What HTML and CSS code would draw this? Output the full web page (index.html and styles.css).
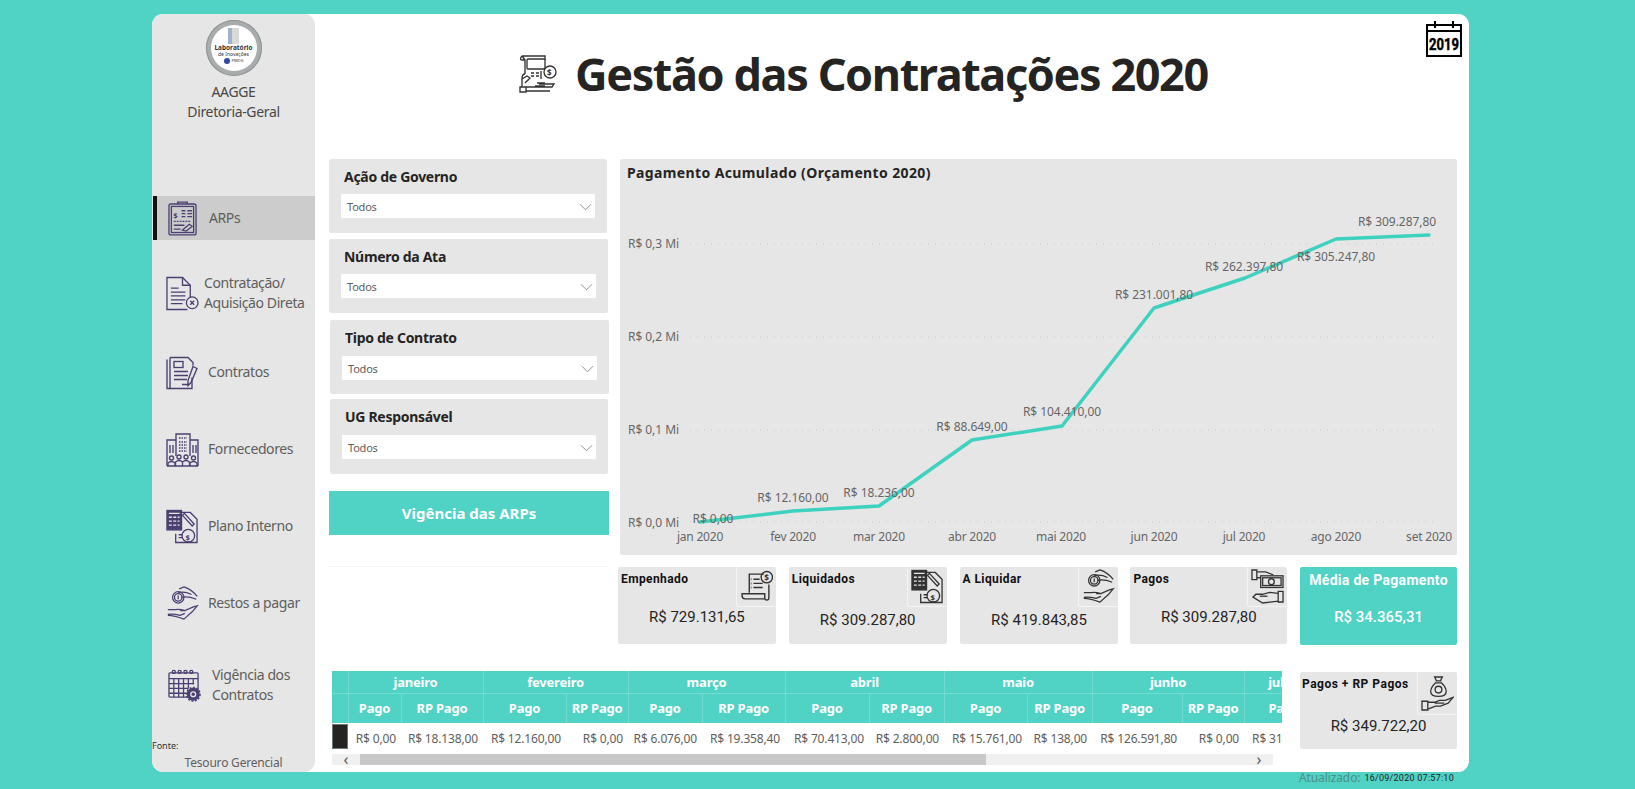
FILE: index.html
```html
<!DOCTYPE html>
<html lang="pt-BR">
<head>
<meta charset="utf-8">
<title>Gestão das Contratações 2020</title>
<link rel="stylesheet" href="styles.css">
</head>
<body>
<svg class="sprite" aria-hidden="true">
  <symbol id="i-arps" viewBox="0 0 30 36"><rect x="1" y="3" width="28" height="32" rx="2"/><rect x="3.500" y="5.500" width="23" height="27"/><path d="M10 3V1h10v2M14 10h4M20 10h5M14 13h4M20 13h5M14 16h4M20 16h5"/><path d="M6 21h18" stroke-dasharray="2 1"/><path d="M6 25h11M6 29h7M15 30l7-6 3 2-6 5z"/><text x="5.500" y="17" class="gl">$</text></symbol>
  <symbol id="i-doc-x" viewBox="0 0 34 35"><path d="M25 22V9l-8-8H1v33h21"/><path d="M17 1v8h8M5 12h8M5 16h15M5 20h15M5 24h15M5 28h12"/><circle cx="27" cy="27" r="6"/><path d="M25 25l4 4M29 25l-4 4"/></symbol>
  <symbol id="i-contract" viewBox="0 0 33 34"><path d="M4 2V33h22V22M4 2h18l5 5v3"/><path d="M1 4v29h3"/><rect x="8" y="6" width="9" height="6"/><path d="M8 16h14M8 20h14M8 24h13M16 29h7"/><path d="M27 11l4 2-6 14-3 3 0-5z"/></symbol>
  <symbol id="i-build" viewBox="0 0 33 35"><path d="M10 24V2h14v22M10 8H1v26M24 8h8v26M1 34h31"/><path d="M13 6h8M13 10h8M13 13h8M13 16h8M13 19h8" stroke-dasharray="1.500 1"/><path d="M4 13v8M7 13v8M27 13v8M30 13v8"/><circle cx="5.500" cy="26" r="2"/><circle cx="13" cy="25" r="2"/><circle cx="20" cy="25" r="2"/><circle cx="27.500" cy="26" r="2"/><path d="M2 34v-3q3.500-3 7 0v3M9.500 34v-4q3.500-3 7 0v4M16.500 34v-4q3.500-3 7 0v4M24 34v-3q3.500-3 7 0v3"/></symbol>
  <symbol id="i-plan" viewBox="0 0 34 35"><path d="M16 3h9l7 7v24H10v-9"/><rect class="solid" x="1" y="1" width="15" height="20"/><path class="lt" d="M3 4h11M3 8h3M7.500 8h3M12 8h2M3 12h3M7.500 12h3M12 12h2M3 16h3M7.500 16h3M12 16h2"/><path d="M19 4l10 11-2 2-10-11zM13 26h4M13 29h4"/><circle cx="23" cy="27" r="6.500"/><text x="20" y="31" class="gl">$</text></symbol>
  <symbol id="i-hands" viewBox="0 0 33 37"><path d="M32 11C28 6 24 3 18 1l-5 2 M12 7c5-1 10 0 14 2M15 12c5-1 11 0 16 2"/><circle cx="12" cy="12" r="6"/><circle cx="12" cy="12" r="4"/><path d="M12 10v4"/><path d="M1 25h8c3-1 7 0 10 1l9-4 4-1-5 6-9 8c-5-2-11-4-17-4M1 30c5-1 9 0 13 1l5-2M14 26h6"/></symbol>
  <symbol id="i-cal-gear" viewBox="0 0 34 34"><rect x="1" y="4" width="30" height="25" rx="1"/><path d="M1 10h30M1 15h26M1 20h20M1 25h18M6 10v19M11 10v19M16 10v19M21 10v10M26 10v6"/><circle cx="6" cy="3" r="1.600"/><circle cx="12" cy="3" r="1.600"/><circle cx="18" cy="3" r="1.600"/><circle cx="24" cy="3" r="1.600"/><circle class="solidc" cx="26" cy="26" r="6"/><circle class="gear" cx="26" cy="26" r="7" stroke-dasharray="2 1.600"/><circle class="lt" cx="26" cy="26" r="2.500"/></symbol>
  <symbol id="i-atm" viewBox="0 0 38 38"><path d="M3 1h23v4M3 1l3 4v14M3 1C1 3 1 5 3 5h3"/><rect x="8" y="4" width="18" height="10" rx="1"/><path d="M12 18h3M17 18h3M12 21h3M17 21h3M22 16v8M6 19c-2 0-3 2-3 5v8"/><circle cx="31" cy="17" r="6"/><text x="28" y="21" class="gl">$</text><path d="M3 24l5-3 3 2-5 5M3 32h4v5H1v-5zM7 32h26l2-3H20M18 28h8M16 31h10M7 36h24"/></symbol>
  <symbol id="i-receipt" viewBox="0 0 32 32"><path d="M9 22V4h14M28 14v13c0 3-4 3-4 0v-4H2v2c0 2 1 3 3 3h19"/><circle cx="26" cy="7" r="5.500"/><text x="23.500" y="10.500" class="gl">$</text><path d="M13 9h6M13 13h9M13 17h9"/><path d="M10.500 9h.6M10.500 13h.6M10.500 17h.6" stroke-width="2"/></symbol>
  <symbol id="i-cash" viewBox="0 0 34 36"><path d="M1 1h5v10H1zM6 3h9l8 3M6 9h4"/><rect x="10" y="7" width="23" height="12"/><rect x="12" y="9" width="19" height="8"/><circle cx="21" cy="13" r="3"/><path d="M33 23v11h-5V23zM28 25l-9-1-7 2H5l-3 3 10 6 16-2"/><path d="M9 28h8"/></symbol>
  <symbol id="i-bag" viewBox="0 0 34 36"><path d="M14 1h8l-2 4h-4zM15 5h6M15 7c-3 3-5 6-5 9 0 3 3 5 8 5s8-2 8-5c0-3-2-6-5-9z"/><circle cx="18" cy="14" r="3.500"/><path d="M1 26h6v9H1zM7 27h7l5-2h6l8-3-5 6-8 3H15l-8 3M14 28h10"/></symbol>
  <symbol id="i-2019" viewBox="0 0 36 37"><path d="M1 5h34v31H1zM1 11h34M9 1v7M27 1v7"/><text x="18" y="30" class="yr" text-anchor="middle" textLength="30" lengthAdjust="spacingAndGlyphs">2019</text></symbol>
</svg>

<div class="page">
  <div class="canvas">
    <aside class="side">
      <div class="brand">
        <div class="logo">
          <div class="logo-in">
            <span class="logo-bars"></span>
            <span class="logo-t">Laboratório</span>
            <span class="logo-s">de Inovações</span>
            <span class="logo-f"><i></i>PMDG</span>
          </div>
        </div>
        <p class="brand-t">AAGGE<br>Diretoria-Geral</p>
      </div>
      <nav class="nav">
        <a class="item item-on"><svg class="ic ic-arps"><use href="#i-arps"/></svg><span>ARPs</span></a>
        <a class="item m-2"><svg class="ic ic-doc"><use href="#i-doc-x"/></svg><span class="two t-doc">Contratação/<br>Aquisição Direta</span></a>
        <a class="item m-3"><svg class="ic"><use href="#i-contract"/></svg><span>Contratos</span></a>
        <a class="item m-4"><svg class="ic"><use href="#i-build"/></svg><span>Fornecedores</span></a>
        <a class="item m-4"><svg class="ic ic-plan"><use href="#i-plan"/></svg><span>Plano Interno</span></a>
        <a class="item m-4"><svg class="ic"><use href="#i-hands"/></svg><span>Restos a pagar</span></a>
        <a class="item m-7"><svg class="ic ic-cal"><use href="#i-cal-gear"/></svg><span class="two t-vig">Vigência dos<br>Contratos</span></a>
      </nav>
      <div class="source">
        <p class="source-l">Fonte:</p>
        <p class="source-v">Tesouro Gerencial</p>
      </div>
    </aside>

    <main class="main">
      <header class="head">
        <div class="head-title">
          <svg class="head-ic"><use href="#i-atm"/></svg>
          <h1>Gestão das Contratações 2020</h1>
        </div>
        <svg class="year"><use href="#i-2019"/></svg>
      </header>

      <div class="mid">
        <section class="filters">
          <div class="slicer">
            <h3>Ação de Governo</h3>
            <div class="select"><span>Todos</span><svg class="chev" viewBox="0 0 14 8"><path d="M1 1l6 6 6-6"/></svg></div>
          </div>
          <div class="slicer s-2">
            <h3>Número da Ata</h3>
            <div class="select"><span>Todos</span><svg class="chev" viewBox="0 0 14 8"><path d="M1 1l6 6 6-6"/></svg></div>
          </div>
          <div class="slicer s-3">
            <h3>Tipo de Contrato</h3>
            <div class="select"><span>Todos</span><svg class="chev" viewBox="0 0 14 8"><path d="M1 1l6 6 6-6"/></svg></div>
          </div>
          <div class="slicer s-4">
            <h3>UG Responsável</h3>
            <div class="select"><span>Todos</span><svg class="chev" viewBox="0 0 14 8"><path d="M1 1l6 6 6-6"/></svg></div>
          </div>
          <button class="cta">Vigência das ARPs</button>
          <div class="rule"></div>
        </section>

        <section class="right">
          <div class="chart">
            <h2>Pagamento Acumulado (Orçamento 2020)</h2>
            <svg class="plot" viewBox="620 159 837 396">
              <g class="grid">
                <path d="M690 244H1437"/><path d="M690 337H1437"/><path d="M690 430H1437"/><path d="M690 522H1437"/>
              </g>
              <g class="ax dl">
                <text x="628" y="248">R$ 0,3 Mi</text>
                <text x="628" y="341">R$ 0,2 Mi</text>
                <text x="628" y="434">R$ 0,1 Mi</text>
                <text x="628" y="527">R$ 0,0 Mi</text>
              </g>
              <g class="ax mid-a">
                <text x="700" y="541">jan 2020</text><text x="793" y="541">fev 2020</text><text x="879" y="541">mar 2020</text><text x="972" y="541">abr 2020</text><text x="1061" y="541">mai 2020</text><text x="1154" y="541">jun 2020</text><text x="1244" y="541">jul 2020</text><text x="1336" y="541">ago 2020</text><text x="1429" y="541">set 2020</text>
              </g>
              <polyline class="line" points="700,522 793,511 879,506 972,440 1062,426 1154,308 1245,278 1336,239 1429,235"/>
              <g class="ax mid-a dl">
                <text x="713" y="523">R$ 0,00</text><text x="793" y="502">R$ 12.160,00</text><text x="879" y="497">R$ 18.236,00</text><text x="972" y="431">R$ 88.649,00</text><text x="1062" y="416">R$ 104.410,00</text><text x="1154" y="299">R$ 231.001,80</text><text x="1244" y="271">R$ 262.397,80</text><text x="1336" y="261">R$ 305.247,80</text><text x="1397" y="226">R$ 309.287,80</text>
              </g>
            </svg>
          </div>
          <div class="cards">
            <article class="card">
              <h4>Empenhado</h4>
              <div class="card-ic"><svg><use href="#i-receipt"/></svg></div>
              <p class="val">R$ 729.131,65</p>
            </article>
            <article class="card c-low">
              <h4>Liquidados</h4>
              <div class="card-ic"><svg><use href="#i-plan"/></svg></div>
              <p class="val">R$ 309.287,80</p>
            </article>
            <article class="card c-low">
              <h4>A Liquidar</h4>
              <div class="card-ic"><svg><use href="#i-hands"/></svg></div>
              <p class="val">R$ 419.843,85</p>
            </article>
            <article class="card">
              <h4>Pagos</h4>
              <div class="card-ic"><svg><use href="#i-cash"/></svg></div>
              <p class="val">R$ 309.287,80</p>
            </article>
            <article class="avg">
              <h4>Média de Pagamento</h4>
              <p class="val">R$ 34.365,31</p>
            </article>
          </div>
        </section>
      </div>

      <div class="bottom">
        <section class="matrix">
          <div class="m-clip">
            <table class="m-table">
              <colgroup>
                <col class="w16"><col class="w53"><col class="w82"><col class="w83"><col class="w62"><col class="w74"><col class="w83"><col class="w84"><col class="w75"><col class="w83"><col class="w65"><col class="w90"><col class="w62"><col class="w80">
              </colgroup>
              <thead>
                <tr class="r1"><th></th><th colspan="2">janeiro</th><th colspan="2">fevereiro</th><th colspan="2">março</th><th colspan="2">abril</th><th colspan="2">maio</th><th colspan="2">junho</th><th>julho</th></tr>
                <tr class="r2"><th></th><th>Pago</th><th>RP Pago</th><th>Pago</th><th>RP Pago</th><th>Pago</th><th>RP Pago</th><th>Pago</th><th>RP Pago</th><th>Pago</th><th>RP Pago</th><th>Pago</th><th>RP Pago</th><th>Pago</th></tr>
              </thead>
              <tbody>
                <tr><td class="mark"><span></span></td><td>R$ 0,00</td><td>R$ 18.138,00</td><td>R$ 12.160,00</td><td>R$ 0,00</td><td>R$ 6.076,00</td><td>R$ 19.358,40</td><td>R$ 70.413,00</td><td>R$ 2.800,00</td><td>R$ 15.761,00</td><td>R$ 138,00</td><td>R$ 126.591,80</td><td>R$ 0,00</td><td class="left">R$ 31.396,00</td></tr>
              </tbody>
            </table>
          </div>
          <div class="scroll">
            <span class="arrow">&#8249;</span>
            <span class="thumb"></span>
            <span class="arrow a-r">&#8250;</span>
          </div>
        </section>
        <article class="card total">
          <h4>Pagos + RP Pagos</h4>
          <div class="card-ic"><svg><use href="#i-bag"/></svg></div>
          <p class="val">R$ 349.722,20</p>
        </article>
      </div>
    </main>
  </div>
  <footer class="updated"><span class="u-l">Atualizado:</span><span class="u-v">16/09/2020 07:57:10</span></footer>
</div>
</body>
</html>
```
FILE: styles.css
```css
* { box-sizing: border-box; }
html, body { margin: 0; height: 100%; }
body { background: #50d2c4; overflow: hidden; font-family: "Noto Sans", "Open Sans", sans-serif; color: #252423; }
p, h1, h2, h3, h4 { margin: 0; }
.sprite { display: none; }
svg use { fill: none; stroke: currentColor; stroke-width: 1.35; }
.gl { font: 700 8px "Noto Sans", sans-serif; fill: currentColor; stroke: none; }
.yr { font: 700 17px "Roboto", sans-serif; fill: currentColor; stroke: currentColor; stroke-width: .5; }
.solid { fill: currentColor; }
.solidc { fill: currentColor; }
.gear { stroke-width: 1.6; }
.lt { stroke: #e6e6e6; fill: none; }

.page { width: 1317px; margin-left: 152px; padding-top: 14px; }
.canvas { display: flex; height: 758px; background: #fff; border-radius: 11px; overflow: hidden; }

/* sidebar */
.side { width: 163px; flex: none; display: flex; flex-direction: column; background: #e6e6e6; border-radius: 11px; color: #605e5c; }
.brand { display: flex; flex-direction: column; align-items: center; padding-top: 6px; }
.logo { width: 56px; height: 56px; padding: 5px; border-radius: 50%; background: #a8acac; box-shadow: inset 0 0 0 1px #8f9494; }
.logo-in { width: 46px; height: 46px; border-radius: 50%; background: #fff; display: flex; flex-direction: column; align-items: center; overflow: hidden; padding-top: 3px; color: #333; }
.logo-bars { width: 11px; height: 16px; flex: none; background: linear-gradient(90deg, #9fb4cc 0 40%, #d9d9d9 40% 100%); }
.logo-t { font-size: 6.5px; line-height: 7px; font-weight: 700; white-space: nowrap; }
.logo-s { font-size: 5px; line-height: 7px; white-space: nowrap; }
.logo-f { display: flex; align-items: center; gap: 2px; font-size: 4px; line-height: 6px; }
.logo-f i { width: 6px; height: 6px; border-radius: 50%; background: #2f4aa0; }
.brand-t { margin-top: 6px; font-size: 14px; line-height: 20px; text-align: center; color: #4a4846; letter-spacing: -.35px; }

.nav { display: flex; flex-direction: column; margin-top: 74px; }
.item { display: flex; align-items: center; height: 44px; padding-left: 14px; font-size: 14px; letter-spacing: -.4px; line-height: 20px; color: #605e5c; }
.item .ic { width: 33px; height: 35px; flex: none; color: #4b3f72; margin-right: 9px; }
.item-on { background: #ccc; position: relative; box-shadow: inset 4px 0 0 #111; margin-left: 1px; padding-left: 15px; }
.item-on .ic { margin-right: 12px; width: 29px; }
.item .ic-doc { margin-right: 5px; }
.m-2 { margin-top: 31px; }
.m-3 { margin-top: 35px; }
.m-4 { margin-top: 33px; }
.m-7 { margin-top: 38px; padding-left: 16px; }
.m-7 .ic { margin-right: 11px; }
.two { display: block; }

.source { margin-top: auto; padding-bottom: 1px; }
.source-l { font-size: 9px; line-height: 12px; color: #333; padding-left: 0; }
.source-v { font-size: 12px; line-height: 17px; text-align: center; letter-spacing: -.2px; margin-top: 2px; }

/* main */
.main { flex: 1; min-width: 0; padding: 0 12px 0 14px; display: flex; flex-direction: column; }
.head { height: 145px; flex: none; display: flex; justify-content: space-between; align-items: flex-start; }
.head-title { display: flex; align-items: center; margin: 40px 0 0 190px; }
.head-ic { width: 38px; height: 38px; color: #333; margin-right: 18px; flex: none; }
.head-title h1 { font-size: 45px; line-height: 40px; font-weight: 700; color: #252423; letter-spacing: -1.4px; white-space: nowrap; }
.year { width: 36px; height: 37px; margin: 6px -5px 0 0; color: #000; }
.year use { stroke-width: 2.1; }

.mid { display: flex; gap: 11px; }
.filters { width: 280px; flex: none; display: flex; flex-direction: column; }
.slicer { width: 278px; height: 74px; background: #e6e6e6; border-radius: 2px; padding: 8px 12px 0 12px; }
.slicer h3 { font-size: 14px; line-height: 20px; font-weight: 700; letter-spacing: -.3px; padding-left: 3px; color: #252423; }
.select { display: flex; align-items: center; justify-content: space-between; height: 24px; margin-top: 7px; background: #fff; padding: 1px 3px 0 6px; font-size: 11px; color: #605e5c; letter-spacing: -.2px; }
.chev { width: 13px; height: 8px; fill: none; stroke: #8a8886; stroke-width: 1; }
.s-2 { margin-top: 6px; width: 279px; }
.s-3 { margin-top: 7px; margin-left: 1px; width: 279px; }
.s-4 { margin-top: 5px; margin-left: 1px; width: 278px; height: 75px; }
.s-3 .select, .s-4 .select { margin-top: 8px; }
.cta { height: 44px; width: 280px; margin-top: 17px; border: 0; background: #50d2c4; color: #fff; font: 700 15px "Noto Sans", sans-serif; }
.rule { height: 1px; margin-top: 31px; background: #f3f3f3; }

.right { width: 837px; flex: none; }
.chart { height: 396px; background: #e6e6e6; border-radius: 2px; position: relative; overflow: hidden; }
.chart h2 { font-size: 14px; line-height: 20px; font-weight: 700; padding: 4px 0 0 7px; color: #252423; letter-spacing: .38px; }
.plot { position: absolute; left: 0; top: 0; width: 837px; height: 396px; }
.grid path { stroke: #c8c8c8; stroke-width: 1; stroke-dasharray: 1 6; }
.ax text { font: 12px "Noto Sans", sans-serif; fill: #666; letter-spacing: -.2px; }
.ax.dl text { letter-spacing: -.05px; }
.mid-a text { text-anchor: middle; }
.line { fill: none; stroke: #3fd1bf; stroke-width: 3.5; stroke-linejoin: round; stroke-linecap: round; }

.cards { display: flex; margin-top: 12px; margin-left: -2px; }
.card { position: relative; width: 158px; height: 77px; margin-right: 13px; background: #e6e6e6; border-radius: 2px; font-family: "Roboto", sans-serif; }
.card h4 { font-size: 12px; line-height: 16px; font-weight: 700; color: #111; padding: 4px 0 0 3px; letter-spacing: .4px; }
.card-ic { position: absolute; right: 0; top: 0; width: 40px; height: 40px; border-left: 1px solid #f4f4f4; border-bottom: 1px solid #f4f4f4; border-radius: 0 0 0 3px; display: flex; align-items: center; justify-content: center; color: #333; }
.card-ic svg { width: 33px; height: 35px; }
.val { font-size: 15px; line-height: 20px; text-align: center; color: #252423; letter-spacing: 0; }
.card .val { padding-top: 20px; }
.card.c-low .val { padding-top: 23px; }
.card:nth-child(3) { margin-right: 12px; width: 159px; }
.card:nth-child(4) { margin-right: 13px; width: 157px; }
.avg { width: 157px; height: 78px; background: #50d2c4; border-radius: 2px; color: #fff; font-family: "Roboto", sans-serif; text-align: center; padding-top: 3px; }
.avg h4 { font-size: 14px; line-height: 20px; font-weight: 700; letter-spacing: .3px; }
.avg .val { color: #fff; font-weight: 500; margin-top: 17px; }

.bottom { display: flex; align-items: flex-start; margin-top: 26px; padding-left: 3px; }
.matrix { width: 950px; flex: none; margin-right: 18px; }
.m-clip { overflow: hidden; width: 950px; }
.m-table { table-layout: fixed; width: 992px; border-collapse: collapse; font-size: 12px; }
.w16 { width: 16px; } .w53 { width: 53px; } .w82 { width: 82px; } .w83 { width: 83px; } .w62 { width: 62px; } .w74 { width: 74px; } .w84 { width: 84px; } .w75 { width: 75px; } .w65 { width: 65px; } .w90 { width: 90px; } .w80 { width: 80px; }
.m-table th { background: #50d2c4; color: #fff; font-size: 13px; font-weight: 700; letter-spacing: -.2px; padding: 0; border-right: 1px solid #73dbcf; border-bottom: 1px solid #73dbcf; overflow: hidden; white-space: nowrap; }
.r1 th { height: 22px; line-height: 20px; }
.r2 th { height: 30px; line-height: 26px; border-bottom: 0; }
.m-table td { height: 30px; padding: 0 5px 0 0; text-align: right; font-size: 12px; letter-spacing: -.15px; color: #605e5c; white-space: nowrap; overflow: hidden; }
.m-table td.left { text-align: left; padding-left: 8px; }
.m-table td.mark { padding: 0; vertical-align: top; }
.mark span { display: block; width: 16px; height: 25px; margin-top: 1px; background: #252423; border: 1px solid #6c7a78; }
.scroll { display: flex; align-items: center; width: 941px; height: 11px; margin-top: 1px; background: #f0f0f0; font-size: 16px; line-height: 11px; color: #555; }
.arrow { width: 28px; flex: none; text-align: center; }
.thumb { width: 626px; height: 11px; background: #c8c8c8; flex: none; }
.a-r { margin-left: auto; width: 28px; }
.card.total { width: 157px; height: 77px; margin: 1px 0 0 0; }
.total h4 { padding-top: 4px; padding-left: 2px; letter-spacing: .5px; }
.total .card-ic { height: 43px; }
.card.total .val { padding-top: 24px; }

.updated { display: flex; align-items: center; justify-content: flex-end; padding-right: 15px; height: 13px; margin-top: -1px; }
.u-l { font-size: 12px; color: #4d8f88; margin-right: 4px; letter-spacing: -.1px; }
.u-v { font: 9px "Roboto", sans-serif; color: #252423; letter-spacing: .25px; }
```
